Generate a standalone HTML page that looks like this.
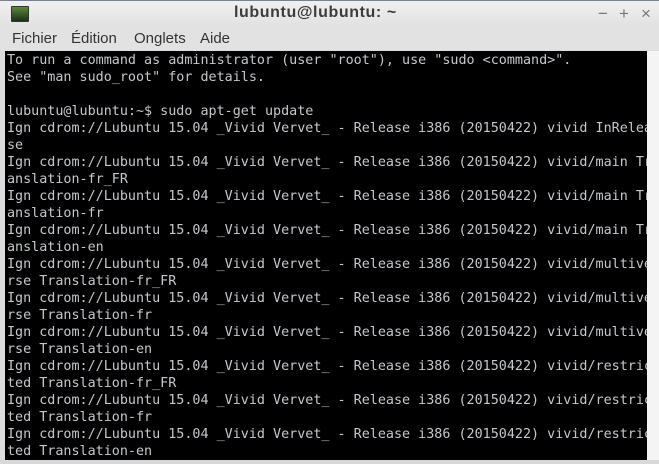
<!DOCTYPE html>
<html><head><style>
body{margin:0;width:659px;height:464px;overflow:hidden;background:#dcdcdc;font-family:"Liberation Sans",sans-serif;position:relative}
.tb{position:absolute;left:0;top:0;width:659px;height:26px;background:linear-gradient(#f0f0f0,#e2e2e2);border-top:1px solid #7a8290;box-sizing:border-box}
.title{position:absolute;left:234px;top:3px;font-weight:bold;font-size:16px;color:#3c3c3c;letter-spacing:0.6px}
.icon{position:absolute;left:11px;top:5px;width:16px;height:14px;background:linear-gradient(#5a8a3a,#1e2e18);border:1px solid #333;border-radius:1px}
.btn{position:absolute;top:3px;font-size:17px;color:#777}
.menu{position:absolute;left:0;top:26px;width:659px;height:24px;background:#e2e2e2;font-size:15px;color:#333}
.menu span{position:absolute;top:4px}
.term{position:absolute;left:5px;top:51px;width:642px;height:409px;background:#000;overflow:hidden}
pre{margin:0;position:absolute;left:2px;top:1px;font-family:"DejaVu Sans Mono","Liberation Mono",monospace;font-size:13.4px;line-height:17px;color:#c4c8cc;white-space:pre}
.sb{position:absolute;left:647px;top:51px;width:12px;height:409px;background:#f4f4f4}
.th{position:absolute;left:651px;top:56px;width:6px;height:27px;background:#b8b8b8;border-radius:3px}
.bot{position:absolute;left:0;top:460px;width:659px;height:4px;background:#d8d8d8}
</style></head><body>
<div class="tb"><div class="icon"></div><div class="title">lubuntu@lubuntu: ~</div>
<span class="btn" style="left:598px">−</span><span class="btn" style="left:619px">+</span><span class="btn" style="left:641px">×</span></div>
<div class="menu"><span style="left:12px">Fichier</span><span style="left:71px">Édition</span><span style="left:134px">Onglets</span><span style="left:200px">Aide</span></div>
<div class="term"><pre>To run a command as administrator (user "root"), use "sudo &lt;command&gt;".
See "man sudo_root" for details.

lubuntu@lubuntu:~$ sudo apt-get update
Ign cdrom://Lubuntu 15.04 _Vivid Vervet_ - Release i386 (20150422) vivid InRelea
se
Ign cdrom://Lubuntu 15.04 _Vivid Vervet_ - Release i386 (20150422) vivid/main Tr
anslation-fr_FR
Ign cdrom://Lubuntu 15.04 _Vivid Vervet_ - Release i386 (20150422) vivid/main Tr
anslation-fr
Ign cdrom://Lubuntu 15.04 _Vivid Vervet_ - Release i386 (20150422) vivid/main Tr
anslation-en
Ign cdrom://Lubuntu 15.04 _Vivid Vervet_ - Release i386 (20150422) vivid/multive
rse Translation-fr_FR
Ign cdrom://Lubuntu 15.04 _Vivid Vervet_ - Release i386 (20150422) vivid/multive
rse Translation-fr
Ign cdrom://Lubuntu 15.04 _Vivid Vervet_ - Release i386 (20150422) vivid/multive
rse Translation-en
Ign cdrom://Lubuntu 15.04 _Vivid Vervet_ - Release i386 (20150422) vivid/restric
ted Translation-fr_FR
Ign cdrom://Lubuntu 15.04 _Vivid Vervet_ - Release i386 (20150422) vivid/restric
ted Translation-fr
Ign cdrom://Lubuntu 15.04 _Vivid Vervet_ - Release i386 (20150422) vivid/restric
ted Translation-en</pre></div>
<div class="sb"><div class="th"></div></div>
<div class="bot"></div>
</body></html>
